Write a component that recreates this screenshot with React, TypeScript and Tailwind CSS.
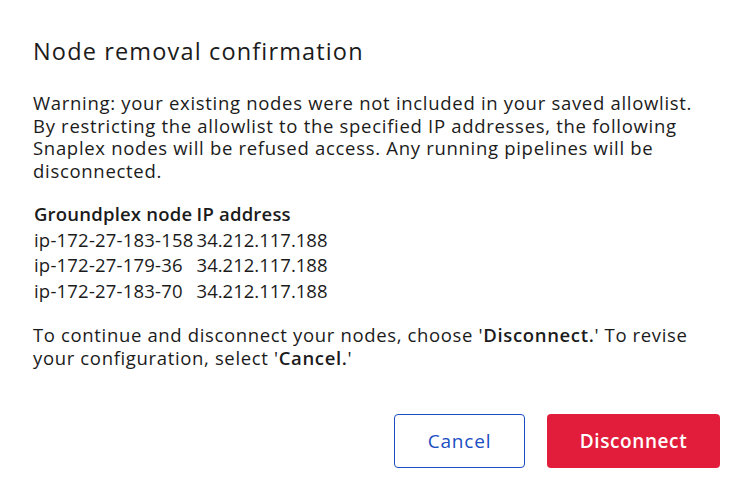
import React from 'react';

const nodes = [
  { name: 'ip-172-27-183-158', ip: '34.212.117.188' },
  { name: 'ip-172-27-179-36', ip: '34.212.117.188' },
  { name: 'ip-172-27-183-70', ip: '34.212.117.188' },
];

export default function App() {
  return (
    <div
      className="flex h-[499px] w-[746px] flex-col bg-white text-[#1b1b1b]"
      style={{ fontFamily: '"Open Sans", "Noto Sans", sans-serif' }}
    >
      <div className="flex-1 pl-[33px] pr-[26px] pt-[36px]">
        <h2 className="text-[23.5px] font-medium leading-[30px] tracking-[1.15px]">Node removal confirmation</h2>

        <p className="mt-[26px] whitespace-nowrap text-[18.5px] leading-[22.6px] tracking-[0.7px]">
          Warning: your existing nodes were not included in your saved allowlist.
          <br />
          By restricting the allowlist to the specified IP addresses, the following
          <br />
          Snaplex nodes will be refused access. Any running pipelines will be
          <br />
          disconnected.
        </p>

        <table className="mt-[19px] border-separate border-spacing-x-[1px] border-spacing-y-[1px] text-[18.5px] leading-[24.5px] tracking-[0.2px]">
          <thead>
            <tr>
              <th className="pr-[2px] text-left font-semibold">Groundplex node</th>
              <th className="text-left font-semibold">IP address</th>
            </tr>
          </thead>
          <tbody>
            {nodes.map((n) => (
              <tr key={n.name}>
                <td className="pr-[2px]">{n.name}</td>
                <td className="tracking-normal">{n.ip}</td>
              </tr>
            ))}
          </tbody>
        </table>

        <p className="mt-[20px] whitespace-nowrap text-[18.5px] leading-[22.6px] tracking-[0.65px]">
          To continue and disconnect your nodes, choose '<span className="font-semibold">Disconnect.</span>' To revise
          <br />
          your configuration, select '<span className="font-semibold">Cancel.</span>'
        </p>
      </div>

      <div className="flex justify-end gap-[22px] pb-[31px] pr-[26px]">
        <button className="h-[54px] w-[131px] rounded-[4px] border border-[#1a4ec2] bg-white text-[19px] tracking-[0.8px] text-[#1a4ec2]">
          Cancel
        </button>
        <button className="h-[54px] w-[173px] rounded-[4px] bg-[#e21d3c] text-[19px] font-semibold tracking-[0.6px] text-white">
          Disconnect
        </button>
      </div>
    </div>
  );
}
